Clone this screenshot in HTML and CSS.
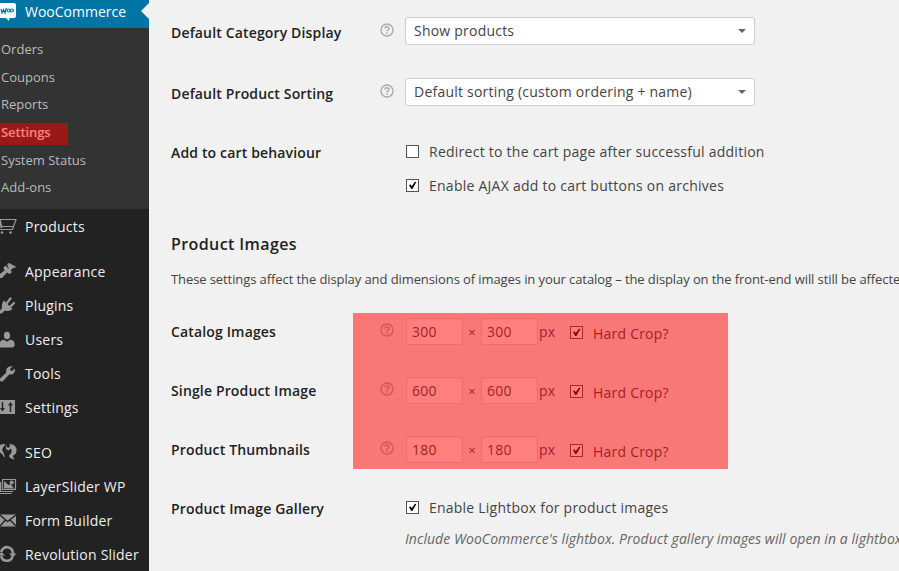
FILE: index.html
```html
<!DOCTYPE html>
<html lang="en">
<head>
<meta charset="utf-8">
<title>WooCommerce Settings</title>
<link rel="stylesheet" href="styles.css">
</head>
<body>
<svg class="defs" width="0" height="0">
  <symbol id="help" viewBox="0 0 14 14"><circle cx="7" cy="7" r="6" fill="none" stroke="currentColor" stroke-width="1.4"/><path d="M5 5.6C5 3.3 9 3.3 9 5.5C9 6.9 7 6.8 7 8.3" fill="none" stroke="currentColor" stroke-width="1.5"/><path d="M6.2 9.2h1.6v1.5H6.2z" fill="currentColor"/></symbol>
  <symbol id="tick" viewBox="0 0 13 13"><path d="M3 6.2L4.5 5.2L5.7 7.2L9 2.8L10.4 3.1L6.4 9.9H5.3z" fill="#000"/></symbol>
</svg>
<div class="app">
  <nav class="sidebar">
    <a class="item current"><svg class="icon" viewBox="0 0 18 20"><path d="M0 2h14q2 0 2 2v11q0 2-2 2H9.500l-.5 3-3-3H0z" fill="#fff"/><path d="M1 8l1 4 1.600-3.500L5 12l1.300-5" fill="none" stroke="#0074a2" stroke-width="1.200"/><circle cx="8.500" cy="9.500" r="1.500" fill="none" stroke="#0074a2" stroke-width="1.200"/><circle cx="12" cy="9.500" r="1.500" fill="none" stroke="#0074a2" stroke-width="1.200"/></svg><span>WooCommerce</span></a>
    <div class="submenu">
      <a>Orders</a><a>Coupons</a><a>Reports</a><a class="active"><span>Settings</span></a><a>System Status</a><a>Add-ons</a>
    </div>
    <div class="group">
      <a class="item"><svg class="icon" viewBox="0 0 18 20"><path d="M0 2.500H16L13.500 9.500H1.500M13.500 10L12.500 12.500H0" fill="none" stroke="#999" stroke-width="1.200"/><path d="M0 3l1.500 8" stroke="#999" stroke-width="1.800"/><circle cx="2" cy="15.500" r="1.300" fill="#999"/><circle cx="10.500" cy="15.500" r="1.300" fill="#999"/></svg><span>Products</span></a>
    </div>
    <div class="group">
      <a class="item"><svg class="icon" viewBox="0 0 18 20"><path d="M7 2l2-1 7.500 4-3.700 1.200-3 3zM5.500 3.500l6.500 6.500-2.500 2-2.500-1.500L2 16H0V12l4.500-3.500-1-3z" fill="#999"/></svg><span>Appearance</span></a>
      <a class="item"><svg class="icon" viewBox="0 0 18 20"><path d="M4 4.500l8.500 8.500q-3.500 3.200-7.500 1.500L1.500 17.500H0v-3L2 12Q1 8 4 4.500z" fill="#999"/><path d="M7 7l3.500-4.500M10.500 10.500l3.500-3.500" stroke="#999" stroke-width="2.300" stroke-linecap="round"/></svg><span>Plugins</span></a>
      <a class="item"><svg class="icon" viewBox="0 0 18 20"><ellipse cx="7" cy="5.500" rx="3.100" ry="3.800" fill="#999"/><path d="M0 12q1-2.300 4-2.300l3 2 3-2q4.500.3 4.500 4V16q-1 1.500-3 1.500H0z" fill="#999"/></svg><span>Users</span></a>
      <a class="item"><svg class="icon" viewBox="0 0 18 20"><path d="M12.500 2.500L9.800 5.200l2 2 3-2.700q.7 3.500-1.600 5.200-1.800 1.200-3.700.5L3 17q-1.300 1-2.600 0T0 14.500L6.300 8.500Q5.500 5 8 3.200 10 2 12.500 2.500z" fill="#999"/></svg><span>Tools</span></a>
      <a class="item"><svg class="icon" viewBox="0 0 18 20"><path d="M0 2h15v14H0z" fill="#999"/><path d="M2.500 4v8M10.500 6v8" stroke="#222" stroke-width="1.400"/><path d="M0 10h5l-2.500 3.500zM8 7.500L10.500 4 13 7.500z" fill="#222"/></svg><span>Settings</span></a>
    </div>
    <div class="group">
      <a class="item"><svg class="icon" viewBox="0 0 18 20"><path d="M0 2Q4 .5 5.500 1.500L3 4.500q-1.500 2 0 4.200L5 14H4Q2 10 0 9.500zM9.500 1Q16.500 1 16.500 7.500q0 4-4 5.200l2 3.800Q9 15.500 9 12.500 13 9.500 11 5.500L8.500 7.500 6 6 5.800 2l2 3 2-1z" fill="#999"/></svg><span>SEO</span></a>
      <a class="item"><svg class="icon" viewBox="0 0 18 20"><path d="M2.500 2.500H15.500V12.500H2.500zM13.500 14.500H0M11.500 16.500H0M.6 5v10" fill="none" stroke="#999" stroke-width="1.200"/><path d="M4 4L8.500 8l2-1 3.500 4.500H4z" fill="#999"/><circle cx="11.700" cy="5.500" r="2" fill="#999"/></svg><span>LayerSlider WP</span></a>
      <a class="item"><svg class="icon" viewBox="0 0 18 20"><path d="M0 3.500h16v12H0z" fill="#999"/><path d="M0 4l7.500 6.500L16 4M0 15l5.500-6M16 15l-6-6" fill="none" stroke="#222" stroke-width="1.400"/></svg><span>Form Builder</span></a>
      <a class="item"><svg class="icon" viewBox="0 0 18 20"><path d="M1.200 7A5.800 5.800 0 0 1 12.800 9M12.500 11.500A5.800 5.800 0 0 1 1.200 11" fill="none" stroke="#999" stroke-width="2.600"/><path d="M9.200 8.500H16.500L12.800 12.500zM-2 10.500L1.500 7 5 10.500z" fill="#999"/></svg><span>Revolution Slider</span></a>
    </div>
  </nav>
  <main class="content">
    <div class="row select-row"><div class="label">Default Category Display</div><svg class="help"><use href="#help"/></svg><div class="select"><span>Show products</span><i></i></div></div>
    <div class="row select-row"><div class="label">Default Product Sorting</div><svg class="help"><use href="#help"/></svg><div class="select"><span>Default sorting (custom ordering + name)</span><i></i></div></div>
    <div class="row cart-row"><div class="label">Add to cart behaviour</div><span></span>
      <div class="checks">
        <label class="check"><span class="box"></span><span>Redirect to the cart page after successful addition</span></label>
        <label class="check"><span class="box"><svg><use href="#tick"/></svg></span><span>Enable AJAX add to cart buttons on archives</span></label>
      </div>
    </div>
    <h3>Product Images</h3>
    <p class="intro">These settings affect the display and dimensions of images in your catalog – the display on the front-end will still be affected</p>
    <section class="sizes">
      <div class="row size-row"><div class="label">Catalog Images</div><svg class="help"><use href="#help"/></svg><div class="dims"><span class="input">300</span><span class="times">×</span><span class="input">300</span><span class="px">px</span><span class="box"><svg><use href="#tick"/></svg></span><span class="crop">Hard Crop?</span></div></div>
      <div class="row size-row"><div class="label">Single Product Image</div><svg class="help"><use href="#help"/></svg><div class="dims"><span class="input">600</span><span class="times">×</span><span class="input">600</span><span class="px">px</span><span class="box"><svg><use href="#tick"/></svg></span><span class="crop">Hard Crop?</span></div></div>
      <div class="row size-row"><div class="label">Product Thumbnails</div><svg class="help"><use href="#help"/></svg><div class="dims"><span class="input">180</span><span class="times">×</span><span class="input">180</span><span class="px">px</span><span class="box"><svg><use href="#tick"/></svg></span><span class="crop">Hard Crop?</span></div></div>
      <div class="highlight"></div>
    </section>
    <div class="row gallery-row"><div class="label">Product Image Gallery</div><span></span>
      <div class="checks">
        <label class="check"><span class="box"><svg><use href="#tick"/></svg></span><span>Enable Lightbox for product images</span></label>
        <p class="note">Include WooCommerce's lightbox. Product gallery images will open in a lightbox</p>
      </div>
    </div>
  </main>
</div>
</body>
</html>
```

FILE: styles.css
```css
* { box-sizing: border-box; }
body { margin: 0; overflow: hidden; background: #f1f1f1; color: #444; font: 14px/20px "Open Sans", sans-serif; letter-spacing: .22px; white-space: nowrap; }
p, h3 { margin: 0; }
.defs { display: none; }
.app { display: flex; width: 899px; height: 571px; overflow: hidden; }

.sidebar { width: 149px; height: 571px; flex: none; background: #222; color: #eee; overflow: hidden; }
.item { display: flex; align-items: center; height: 34px; }
.icon { width: 18px; height: 20px; margin-right: 7px; flex: none; }
.item.current { position: relative; height: 28px; padding-bottom: 4px; background: #0074a2; color: #fff; letter-spacing: 0; }
.item.current .icon { margin-top: -2px; }
.item.current::after { content: ""; position: absolute; right: 0; top: 3px; border: solid transparent; border-width: 8px 8px 8px 0; border-right-color: #f1f1f1; }
.submenu { display: grid; grid-auto-rows: 27.65px; height: 181px; padding-top: 8px; background: #333; color: #bbb; font-size: 13px; line-height: 27px; letter-spacing: 0; }
.submenu a { padding-left: 1px; }
.submenu .active { position: relative; color: #fff; font-weight: 600; letter-spacing: -.1px; }
.submenu .active::after { content: ""; position: absolute; left: 0; top: 4px; width: 68px; height: 22px; background: rgba(255, 0, 0, .5); }
.group { margin-bottom: 11px; }
.submenu + .group { padding-top: 1px; }

.content { flex: 1; min-width: 0; padding-left: 22px; overflow: hidden; }
.row { display: grid; grid-template-columns: 209px 25px 1fr; align-items: start; }
.label { color: #222; font-weight: 600; letter-spacing: .15px; }
.help { width: 14px; height: 14px; color: #aaa; }
.select-row { height: 61px; padding-top: 17px; }
.select-row .label { padding-top: 6px; }
.select-row .help { margin-top: 6px; }
.select { display: flex; align-items: center; justify-content: space-between; width: 350px; height: 28px; padding: 0 8px; background: #fff; border: 1px solid #ccc; border-radius: 3px; }
.select i { border: solid transparent; border-width: 4px 4px 0; border-top-color: #666; }
.cart-row { height: 109px; padding-top: 20px; letter-spacing: .25px; }
.cart-row .label { padding-top: 1px; }
.checks { display: grid; row-gap: 14px; }
.check { display: flex; align-items: center; height: 20px; padding-left: 1px; }
.box { display: block; width: 13px; height: 13px; margin-right: 10px; flex: none; background: #fff; border: 1px solid #555; }
.check .box { margin-top: -2px; }
.box svg { display: block; width: 13px; height: 13px; margin: -1px; }
h3 { height: 26px; color: #222; font-size: 16px; line-height: 26px; font-weight: 600; letter-spacing: .4px; }
.intro { height: 45px; padding-top: 12px; font-size: 13px; line-height: 20px; letter-spacing: -.09px; }
.sizes { position: relative; }
.size-row { height: 59px; padding-top: 16px; }
.size-row .label { padding-top: 4px; }
.size-row .help { margin-top: 5px; }
.dims { display: flex; align-items: center; height: 27px; padding-left: 1px; }
.input { width: 57px; height: 27px; padding-left: 5px; line-height: 25px; background: #fff; border: 1px solid #ddd; box-shadow: inset 0 1px 2px rgba(0, 0, 0, .07); }
.times { width: 18px; text-align: center; font-size: 13px; }
.px { width: 32px; padding-left: 1px; }
.dims .box { margin-top: 1px; }
.crop { padding-top: 4px; }
.highlight { position: absolute; left: 182px; top: 11px; width: 375px; height: 156px; background: rgba(255, 0, 0, .5); }
.gallery-row { padding-top: 19px; }
.gallery-row .label { padding-top: 1px; }
.gallery-row .checks { row-gap: 11px; }
.note { color: #666; font-style: italic; letter-spacing: .06px; }
```
